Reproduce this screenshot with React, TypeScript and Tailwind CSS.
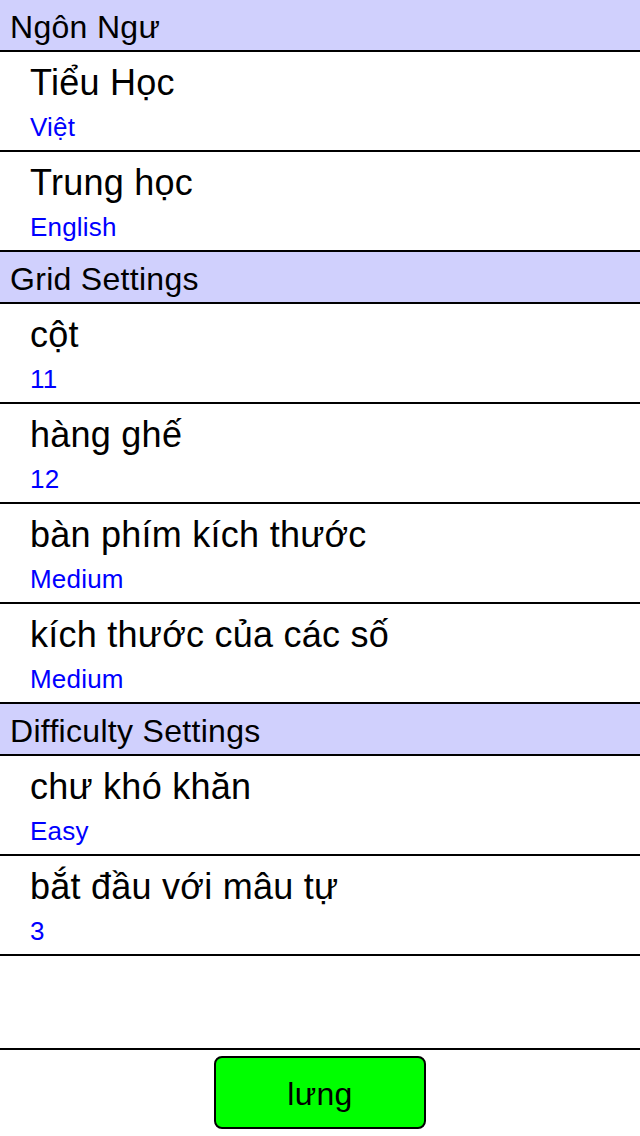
const sections: { title: string; items: { label: string; value: string }[] }[] = [
  {
    title: 'Ngôn Ngư',
    items: [
      { label: 'Tiểu Học', value: 'Việt' },
      { label: 'Trung học', value: 'English' },
    ],
  },
  {
    title: 'Grid Settings',
    items: [
      { label: 'cột', value: '11' },
      { label: 'hàng ghế', value: '12' },
      { label: 'bàn phím kích thước', value: 'Medium' },
      { label: 'kích thước của các số', value: 'Medium' },
    ],
  },
  {
    title: 'Difficulty Settings',
    items: [
      { label: 'chư khó khăn', value: 'Easy' },
      { label: 'bắt đầu với mâu tự', value: '3' },
    ],
  },
];

export default function App() {
  return (
    <div className="flex h-[1136px] w-[640px] flex-col bg-white font-['Liberation_Sans',Arial,sans-serif] text-black">
      {/* Settings list */}
      <div className="flex flex-1 flex-col">
        {sections.map((section) => (
          <div key={section.title}>
            <div className="h-[52px] border-b-2 border-black bg-[#d0d0fd] pl-[10px] pt-[11px] text-[32px] leading-[32px] tracking-[0.3px]">
              {section.title}
            </div>
            {section.items.map((item) => (
              <div key={item.label} className="h-[100px] border-b-2 border-black pl-[30px] pt-[13px]">
                <div className="text-[36px] leading-[36px] tracking-[0.25px]">{item.label}</div>
                <div className="mt-[13px] text-[26px] leading-[26px] tracking-[0.2px] text-[#0000ff]">{item.value}</div>
              </div>
            ))}
          </div>
        ))}
      </div>

      {/* Footer */}
      <div className="flex h-[88px] items-start justify-center border-t-2 border-black pt-[6px]">
        <button className="flex h-[73px] w-[212px] items-center justify-center rounded-lg border-2 border-black bg-[#00ff00] pt-[3px] text-[32px] leading-[32px] tracking-[0.3px]">
          lưng
        </button>
      </div>
    </div>
  );
}
